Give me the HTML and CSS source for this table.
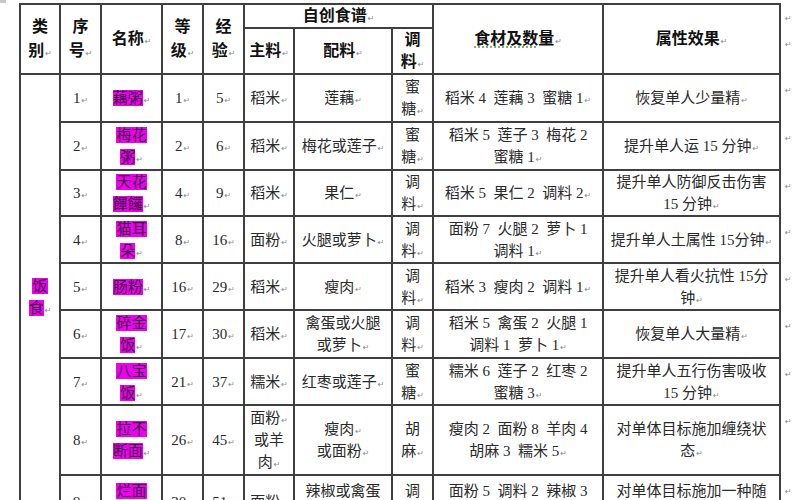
FILE: index.html
```html
<!DOCTYPE html>
<html lang="zh-CN">
<head>
<meta charset="utf-8">
<title>自创食谱</title>
<link rel="stylesheet" href="styles.css">
</head>
<body>
<span class="handle"></span>
<table class="recipes">
  <colgroup>
    <col class="c-type"><col class="c-no"><col class="c-name"><col class="c-lv"><col class="c-exp">
    <col class="c-main"><col class="c-side"><col class="c-spice"><col class="c-mat"><col class="c-eff"><col class="c-eol">
  </colgroup>
  <tr class="h1">
    <th rowspan="2" class="tall">类<br>别<i>↵</i></th>
    <th rowspan="2" class="tall">序<br>号<i>↵</i></th>
    <th rowspan="2">名称<i>↵</i></th>
    <th rowspan="2" class="tall">等<br>级<i>↵</i></th>
    <th rowspan="2" class="tall">经<br>验<i>↵</i></th>
    <th colspan="3">自创食谱<i>↵</i></th>
    <th rowspan="2"><span class="gram">食材及数</span>量<i>↵</i></th>
    <th rowspan="2">属性效果<i>↵</i></th>
    <td class="eol eol-h1"><i>↵</i></td>
  </tr>
  <tr class="h2">
    <th>主料<i>↵</i></th>
    <th>配料<i>↵</i></th>
    <th>调<br>料<i>↵</i></th>
    <td class="eol"><i>↵</i></td>
  </tr>
  <tr class="r48">
    <td rowspan="9" class="type"><span class="hl">饭<br>食</span><i>↵</i></td>
    <td>1<i>↵</i></td>
    <td><span class="hl">藕粥</span><i>↵</i></td>
    <td>1<i>↵</i></td>
    <td>5<i>↵</i></td>
    <td>稻米<i>↵</i></td>
    <td>莲藕<i>↵</i></td>
    <td>蜜<br>糖<i>↵</i></td>
    <td>稻米 4&nbsp; 莲藕 3&nbsp; 蜜糖 1<i>↵</i></td>
    <td>恢复单人少量精<i>↵</i></td>
    <td class="eol"><i>↵</i></td>
  </tr>
  <tr class="r48">
    <td>2<i>↵</i></td>
    <td><span class="hl">梅花<br>粥</span><i>↵</i></td>
    <td>2<i>↵</i></td>
    <td>6<i>↵</i></td>
    <td>稻米<i>↵</i></td>
    <td>梅花或莲子<i>↵</i></td>
    <td>蜜<br>糖<i>↵</i></td>
    <td>稻米 5&nbsp; 莲子 3&nbsp; 梅花 2<br>蜜糖 1<i>↵</i></td>
    <td>提升单人运 15 分钟<i>↵</i></td>
    <td class="eol"><i>↵</i></td>
  </tr>
  <tr class="r46">
    <td>3<i>↵</i></td>
    <td><span class="hl">天花<br>饆饠</span><i>↵</i></td>
    <td>4<i>↵</i></td>
    <td>9<i>↵</i></td>
    <td>稻米<i>↵</i></td>
    <td>果仁<i>↵</i></td>
    <td>调<br>料<i>↵</i></td>
    <td>稻米 5&nbsp; 果仁 2&nbsp; 调料 2<i>↵</i></td>
    <td>提升单人防御反击伤害<br>15 分钟<i>↵</i></td>
    <td class="eol"><i>↵</i></td>
  </tr>
  <tr class="r47">
    <td>4<i>↵</i></td>
    <td><span class="hl">猫耳<br>朵</span><i>↵</i></td>
    <td>8<i>↵</i></td>
    <td>16<i>↵</i></td>
    <td>面粉<i>↵</i></td>
    <td>火腿或萝卜<i>↵</i></td>
    <td>调<br>料<i>↵</i></td>
    <td>面粉 7&nbsp; 火腿 2&nbsp; 萝卜 1<br>调料 1<i>↵</i></td>
    <td>提升单人土属性 15分钟<i>↵</i></td>
    <td class="eol"><i>↵</i></td>
  </tr>
  <tr class="r47">
    <td>5<i>↵</i></td>
    <td><span class="hl">肠粉</span><i>↵</i></td>
    <td>16<i>↵</i></td>
    <td>29<i>↵</i></td>
    <td>稻米<i>↵</i></td>
    <td>瘦肉<i>↵</i></td>
    <td>调<br>料<i>↵</i></td>
    <td>稻米 3&nbsp; 瘦肉 2&nbsp; 调料 1<i>↵</i></td>
    <td>提升单人看火抗性 15分<br>钟<i>↵</i></td>
    <td class="eol"><i>↵</i></td>
  </tr>
  <tr class="r48">
    <td>6<i>↵</i></td>
    <td><span class="hl">碎金<br>饭</span><i>↵</i></td>
    <td>17<i>↵</i></td>
    <td>30<i>↵</i></td>
    <td>稻米<i>↵</i></td>
    <td>禽蛋或火腿<br>或萝卜<i>↵</i></td>
    <td>调<br>料<i>↵</i></td>
    <td>稻米 5&nbsp; 禽蛋 2&nbsp; 火腿 1<br>调料 1&nbsp; 萝卜 1<i>↵</i></td>
    <td>恢复单人大量精<i>↵</i></td>
    <td class="eol"><i>↵</i></td>
  </tr>
  <tr class="r47">
    <td>7<i>↵</i></td>
    <td><span class="hl">八宝<br>饭</span><i>↵</i></td>
    <td>21<i>↵</i></td>
    <td>37<i>↵</i></td>
    <td>糯米<i>↵</i></td>
    <td>红枣或莲子<i>↵</i></td>
    <td>蜜<br>糖<i>↵</i></td>
    <td>糯米 6&nbsp; 莲子 2&nbsp; 红枣 2<br>蜜糖 3<i>↵</i></td>
    <td>提升单人五行伤害吸收<br>15 分钟<i>↵</i></td>
    <td class="eol"><i>↵</i></td>
  </tr>
  <tr class="r70">
    <td>8<i>↵</i></td>
    <td><span class="hl">拉不<br>断面</span><i>↵</i></td>
    <td>26<i>↵</i></td>
    <td>45<i>↵</i></td>
    <td>面粉<i>↵</i><br>或羊<br>肉<i>↵</i></td>
    <td>瘦肉<i>↵</i><br>或面粉<i>↵</i></td>
    <td>胡<br>麻<i>↵</i></td>
    <td>瘦肉 2&nbsp; 面粉 8&nbsp; 羊肉 4<br>胡麻 3&nbsp; 糯米 5<i>↵</i></td>
    <td>对单体目标施加缠绕状<br>态<i>↵</i></td>
    <td class="eol"><i>↵</i></td>
  </tr>
  <tr class="r54">
    <td>9<i>↵</i></td>
    <td><span class="hl">烂面<br>糊</span><i>↵</i></td>
    <td>30<i>↵</i></td>
    <td>51<i>↵</i></td>
    <td>面粉<i>↵</i></td>
    <td>辣椒或禽蛋<br>或火腿<i>↵</i></td>
    <td>调<br>料<i>↵</i></td>
    <td>面粉 5&nbsp; 调料 2&nbsp; 辣椒 3<br>禽蛋 2<i>↵</i></td>
    <td>对单体目标施加一种随<br>机状态<i>↵</i></td>
    <td class="eol"><i>↵</i></td>
  </tr>
</table>
</body>
</html>
```

FILE: styles.css
```css
html, body {
  margin: 0;
  padding: 0;
  overflow: hidden;
  background: #ffffff;
}

body {
  padding: 3px 0 0 19px;
  font-family: "Liberation Serif", "Noto Sans CJK SC", serif;
  font-size: 15px;
  color: #2a2a2a;
  position: relative;
}

.handle {
  position: absolute;
  left: 0;
  top: 0;
  width: 6px;
  height: 3px;
  background: #c8c8c8;
}

.recipes {
  border-collapse: collapse;
  table-layout: fixed;
  width: 781px;
}

.c-type { width: 40px; }
.c-no { width: 41px; }
.c-name { width: 61px; }
.c-lv { width: 41px; }
.c-exp { width: 41px; }
.c-main { width: 50px; }
.c-side { width: 98px; }
.c-spice { width: 41px; }
.c-mat { width: 170px; }
.c-eff { width: 177px; }
.c-eol { width: 21px; }

.recipes th,
.recipes td {
  border: 2px solid #3f3f3f;
  padding: 0;
  text-align: center;
  vertical-align: middle;
  line-height: 22px;
  white-space: nowrap;
  overflow: hidden;
}

.recipes th {
  font-family: "Liberation Serif", "Noto Sans CJK SC", serif;
  font-weight: bold;
  font-size: 16px;
  line-height: 22px;
  color: #111;
}

.recipes th.tall {
  line-height: 24px;
}

.h1 { height: 24px; }
.h2 { height: 46px; }
.r46 { height: 46px; }
.r47 { height: 47px; }
.r48 { height: 48px; }
.r54 { height: 54px; }
.r70 { height: 70px; }

.recipes td.type {
  vertical-align: top;
  padding-top: 200px;
}

.recipes td.eol {
  border: none;
  text-align: left;
  vertical-align: top;
  padding: 8px 0 0 3px;
  line-height: 12px;
}

.recipes td.eol-h1 {
  padding-top: 6px;
}

.hl {
  background: #f000f0;
  color: #3a1040;
}

i {
  font-style: normal;
  font-weight: normal;
  font-family: "DejaVu Sans", sans-serif;
  font-size: 8px;
  line-height: 0;
  color: #8a8a8a;
  margin-left: 1px;
}

.gram {
  text-decoration: underline dotted #5aa05a;
  text-underline-offset: 3px;
}
```
